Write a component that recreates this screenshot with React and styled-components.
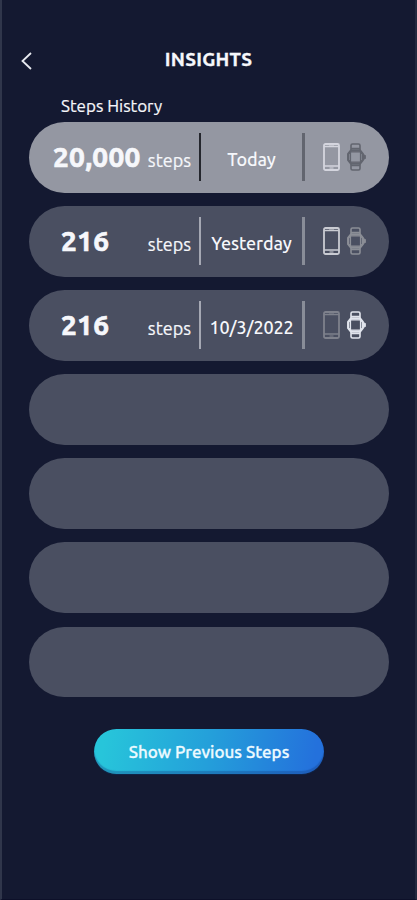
import React from 'react';
import styled, { createGlobalStyle } from 'styled-components';

const GlobalStyle = createGlobalStyle`
  * {
    box-sizing: border-box;
  }

  body {
    margin: 0;
    background: #141931;
    font-family: 'Ubuntu', 'Noto Sans', sans-serif;
    color: #f6f7fb;
  }
`;

const Screen = styled.main`
  width: 417px;
  height: 900px;
  background: #141931;
  border-left: 2px solid #30364b;
  border-right: 2px solid #23283e;
  border-bottom: 1px solid #0d1029;
  overflow: hidden;
`;

const Header = styled.header`
  display: grid;
  grid-template-columns: 48px 1fr 48px;
  align-items: center;
  height: 30px;
  margin-top: 45px;
`;

const BackButton = styled.button`
  display: flex;
  padding: 0;
  margin: 2px 0 0 18px;
  width: 13px;
  border: 0;
  background: none;
  color: #e8eaf0;
`;

const Title = styled.h1`
  margin: -3px 0 0;
  font-size: 19px;
  line-height: 26px;
  font-weight: 700;
  letter-spacing: 0.25px;
  text-align: center;
  -webkit-text-stroke: 0.3px currentColor;
`;

const Subtitle = styled.h2`
  margin: 19px 0 0 59px;
  font-size: 17px;
  line-height: 24px;
  font-weight: 400;
  -webkit-text-stroke: 0.2px currentColor;
`;

const List = styled.ul`
  display: grid;
  gap: 13.6px;
  list-style: none;
  margin: 4px 0 0 27px;
  padding: 0;
  width: 360px;
`;

const Row = styled.li`
  display: grid;
  grid-template-columns: 170px 2px 101px 3px 1fr;
  align-items: center;
  height: 70.5px;
  border-radius: 36px;
  background: ${({ $active }) => ($active ? '#9497a2' : '#4a4f61')};
`;

const Steps = styled.div`
  display: flex;
  align-items: baseline;
  justify-content: space-between;
  padding: 0 8px 0 ${({ $wide }) => ($wide ? '24px' : '32px')};
`;

const Count = styled.span`
  font-size: 28px;
  line-height: 38px;
  font-weight: 700;
  letter-spacing: 0.3px;
  -webkit-text-stroke: 0.7px currentColor;
`;

const Unit = styled.span`
  font-size: 18px;
  -webkit-text-stroke: 0.2px currentColor;
`;

const Divider = styled.span`
  height: 48px;
  background: ${({ $color }) => $color};
`;

const Day = styled.span`
  padding-top: 3px;
  font-size: 18px;
  line-height: 24px;
  font-weight: 500;
  letter-spacing: -0.1px;
  text-align: center;
  white-space: nowrap;
`;

const Devices = styled.div`
  display: flex;
  gap: 6px;
  padding-left: 18px;
`;

const Icon = styled.svg`
  display: block;
  color: ${({ $color }) => $color};
  fill: none;
  stroke: currentColor;
  stroke-width: 1.8;
  stroke-linejoin: round;
`;

const PreviousButton = styled.button`
  display: block;
  width: 230px;
  height: 45px;
  margin: 32px 0 0 92px;
  padding: 0;
  border: 0;
  border-radius: 23px;
  background: linear-gradient(100deg, #27c5da 5%, #249fda 50%, #2471dc 95%);
  box-shadow: inset 0 -3px 1px rgba(20, 60, 130, 0.35), 0 1px 1px #10254a;
  color: #edfaff;
  font: 500 17px/24px 'Ubuntu', 'Noto Sans', sans-serif;
  -webkit-text-stroke: 0.3px currentColor;
`;

const PhoneIcon = ({ color }) => (
  <Icon $color={color} width="17" height="28" viewBox="0 0 17 28">
    <rect x="1" y="1" width="15" height="26" rx="1.5" />
    <path d="M1 3.5h15M1 23h15" strokeWidth="1.3" />
    <path d="M6 3h5M6.5 25h4" strokeWidth="1.2" />
  </Icon>
);

const WatchIcon = ({ color }) => (
  <Icon $color={color} width="21" height="28" viewBox="0 0 21 28">
    <path
      d="M5 8V2.500Q5 1 6.500 1h6Q14 1 14 2.500V8M5 20v5.500Q5 27 6.500 27h6q1.500 0 1.500-1.500V20M5 5.500h9M5 22.500h9"
      strokeWidth="1.6"
    />
    <path d="M5 7.500h9l2.800 3.500v6L14 20.500H5L2.200 17v-6z" strokeWidth="2.300" />
    <rect x="4.500" y="9" width="10" height="10" strokeWidth="1.200" />
    <path d="M17.500 11.500l2 1v3l-2 1z" fill="currentColor" strokeWidth="0.800" />
  </Icon>
);

const history = [
  {
    count: '20,000',
    day: 'Today',
    active: true,
    lines: ['#24262d', '#62656f'],
    phone: '#d4d5de',
    watch: '#62656f',
  },
  {
    count: '216',
    day: 'Yesterday',
    lines: ['#a5a8b3', '#898d98'],
    phone: '#c9cbd2',
    watch: '#8b8e96',
  },
  {
    count: '216',
    day: '10/3/2022',
    lines: ['#a5a8b3', '#898d98'],
    phone: '#7e818c',
    watch: '#e1e4ed',
  },
  {},
  {},
  {},
  {},
];

const HistoryRow = ({ item }) => (
  <Row $active={item.active}>
    {item.count && (
      <>
        <Steps $wide={item.active}>
          <Count>{item.count}</Count>
          <Unit>steps</Unit>
        </Steps>
        <Divider $color={item.lines[0]} />
        <Day>{item.day}</Day>
        <Divider $color={item.lines[1]} />
        <Devices>
          <PhoneIcon color={item.phone} />
          <WatchIcon color={item.watch} />
        </Devices>
      </>
    )}
  </Row>
);

export default function App() {
  return (
    <>
      <GlobalStyle />
      <Screen>
        <Header>
          <BackButton aria-label="Back">
            <svg width="13" height="20" viewBox="0 0 13 20" fill="none">
              <path d="M11 2L2.500 10l8.500 8" stroke="currentColor" strokeWidth="1.800" />
            </svg>
          </BackButton>
          <Title>INSIGHTS</Title>
        </Header>
        <Subtitle>Steps History</Subtitle>
        <List>
          {history.map((item, index) => (
            <HistoryRow key={index} item={item} />
          ))}
        </List>
        <PreviousButton>Show Previous Steps</PreviousButton>
      </Screen>
    </>
  );
}
